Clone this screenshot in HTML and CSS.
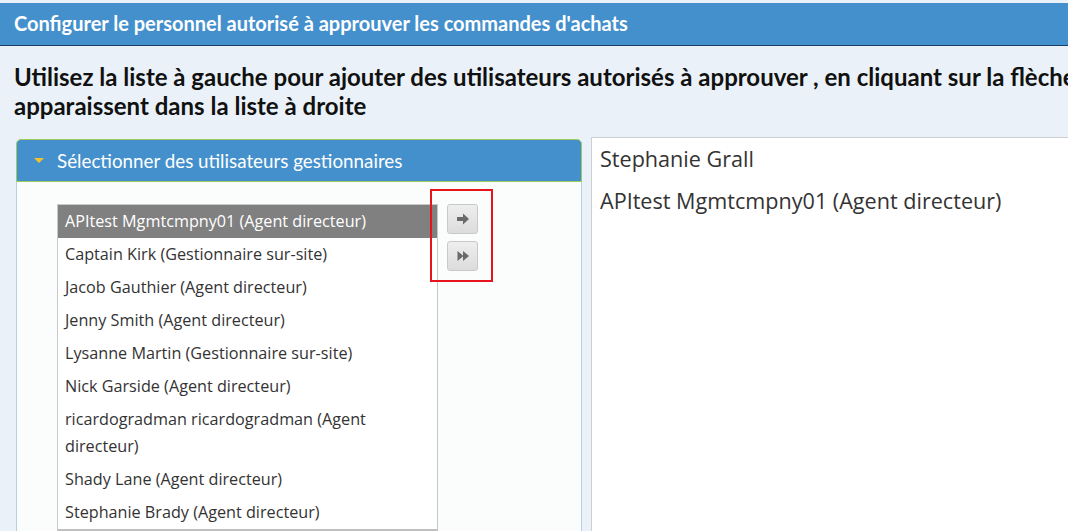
FILE: index.html
```html
<!DOCTYPE html>
<html>
<head>
    <title>Personnel autorisé</title>
    <link rel="stylesheet" href="styles.css">
</head>
<body>
    <div class="titlebar">Configurer le personnel autorisé à approuver les commandes d'achats</div>
    <div class="content">
        <h2 class="intro">Utilisez la liste à gauche pour ajouter des utilisateurs autorisés à approuver , en cliquant sur la flèche, ceux-ci<br>apparaissent dans la liste à droite</h2>
        <div class="columns">
            <div class="panel">
                <div class="panel-head">
                    <span class="caret"></span>
                    Sélectionner des utilisateurs gestionnaires
                </div>
                <div class="panel-body">
                    <ul class="userlist">
                        <li class="active">APItest Mgmtcmpny01 (Agent directeur)</li>
                        <li>Captain Kirk (Gestionnaire sur-site)</li>
                        <li>Jacob Gauthier (Agent directeur)</li>
                        <li>Jenny Smith (Agent directeur)</li>
                        <li>Lysanne Martin (Gestionnaire sur-site)</li>
                        <li>Nick Garside (Agent directeur)</li>
                        <li>ricardogradman ricardogradman (Agent directeur)</li>
                        <li>Shady Lane (Agent directeur)</li>
                        <li>Stephanie Brady (Agent directeur)</li>
                        <li class="picked">Stephanie Grall (Agent directeur)</li>
                    </ul>
                    <div class="movers">
                        <button class="move-btn" title="Ajouter">
                            <svg width="14" height="14" viewBox="0 0 14 14">
                                <path d="M1 5h6V1.5l6 5.5-6 5.5V9H1z" fill="#6a6a6a"/>
                            </svg>
                        </button>
                        <button class="move-btn" title="Ajouter tout">
                            <svg width="14" height="14" viewBox="0 0 14 14">
                                <path d="M1.5 2l6 5-6 5z M7 2l6 5-6 5z" fill="#6a6a6a"/>
                            </svg>
                        </button>
                    </div>
                    <div class="highlight"></div>
                </div>
            </div>
            <div class="selected-list">
                <div class="selected-item">Stephanie Grall</div>
                <div class="selected-item">APItest Mgmtcmpny01 (Agent directeur)</div>
            </div>
        </div>
    </div>
</body>
</html>
```

FILE: styles.css
```css
body {
    margin: 0;
    padding: 3px 0 0 0;
    background-color: #eaf1f8;
    font-family: "Open Sans", "Liberation Sans", sans-serif;
    overflow: hidden;
}

.titlebar {
    height: 42px;
    line-height: 40px;
    padding-left: 14px;
    background-color: #4490cd;
    border-bottom: 1px solid #1b3f66;
    color: #fff;
    font-family: Lato, sans-serif;
    font-weight: bold;
    font-size: 20px;
    white-space: nowrap;
}

.content {
    width: 1200px;
}

.intro {
    margin: 16px 0 0 14px;
    font-family: Lato, sans-serif;
    font-weight: bold;
    font-size: 24px;
    line-height: 29px;
    color: #111;
    white-space: nowrap;
}

.columns {
    display: flex;
    align-items: flex-start;
    gap: 9px;
    margin: 19px 0 0 16px;
}

.panel {
    width: 566px;
}

.panel-head {
    height: 41px;
    background-color: #4490cd;
    border: 1px solid #9ccd5a;
    border-radius: 5px 5px 0 0;
    color: #fff;
    font-family: Lato, sans-serif;
    font-size: 18.8px;
    display: flex;
    align-items: center;
}

.caret {
    width: 0;
    height: 0;
    border-left: 5px solid transparent;
    border-right: 5px solid transparent;
    border-top: 5px solid #f1c232;
    margin: 0 13px 0 17px;
}

.panel-body {
    position: relative;
    display: flex;
    align-items: flex-start;
    gap: 9px;
    height: 400px;
    padding: 22px 0 0 40px;
    background-color: #fbfcfc;
    border-left: 1px solid #b7cfe4;
    border-right: 1px solid #b7cfe4;
}

.userlist {
    list-style: none;
    margin: 0;
    padding: 0;
    width: 379px;
    background-color: #fff;
    border: 1px solid #c8c8c8;
    border-bottom: none;
    font-size: 16.2px;
    color: #333;
}

.userlist li {
    padding: 3px 40px 3px 7px;
    line-height: 27px;
}

.userlist li.active {
    background-color: #808080;
    color: #fff;
}

.userlist li.picked {
    background-color: #c0c0c0;
}

.movers {
    display: flex;
    flex-direction: column;
    gap: 7px;
}

.move-btn {
    width: 31px;
    height: 30px;
    padding: 0;
    border: 1px solid #c9c9c9;
    border-radius: 3px;
    background: linear-gradient(#eeeeee, #dcdcdc);
    display: flex;
    align-items: center;
    justify-content: center;
}

.highlight {
    position: absolute;
    left: 413px;
    top: 7px;
    width: 59px;
    height: 89px;
    border: 2px solid #e8141b;
}

.selected-list {
    flex: 1;
    height: 420px;
    margin-top: -2px;
    padding: 0 8px;
    background-color: #fff;
    border: 1px solid #cfcfcf;
    font-size: 21.6px;
    color: #333;
}

.selected-item {
    line-height: 42px;
}
```
